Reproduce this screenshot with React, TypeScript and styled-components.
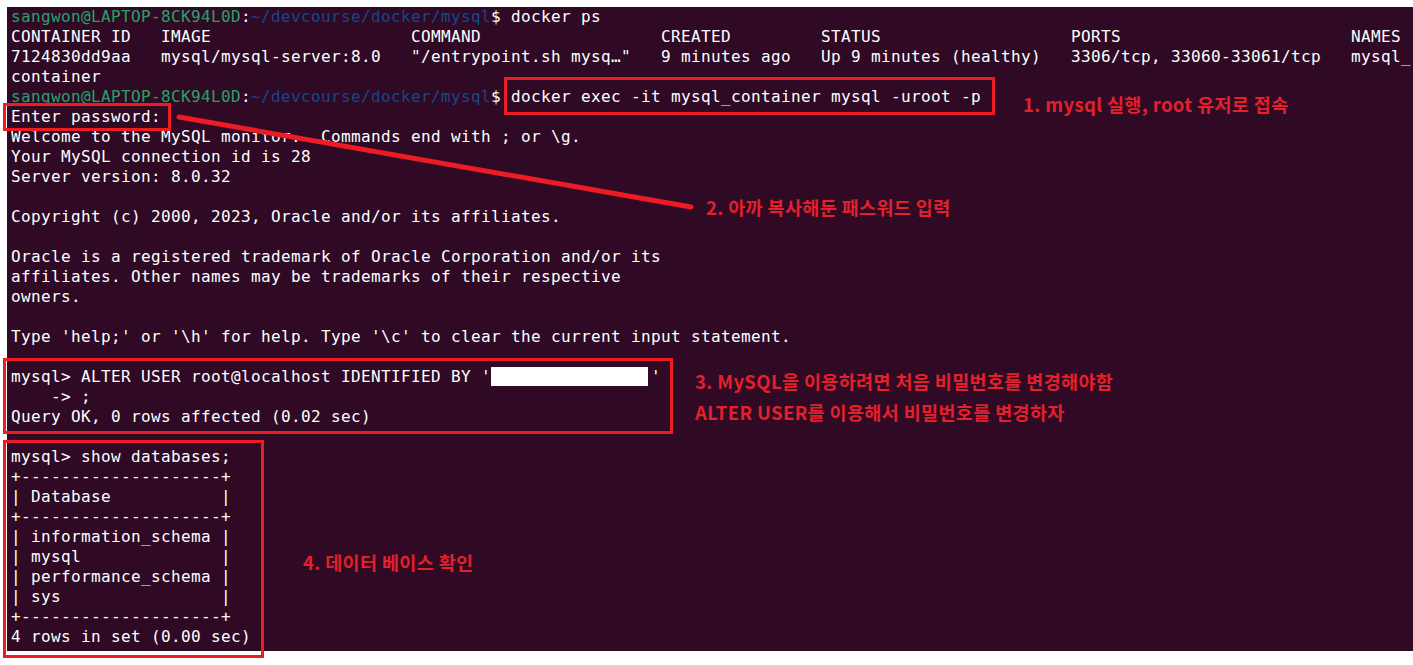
import React, { FC } from "react";
import styled, { createGlobalStyle } from "styled-components";

const GlobalStyle = createGlobalStyle`
  html, body {
    margin: 0;
    padding: 0;
    background: #ffffff;
  }
`;

const Page = styled.div`
  padding: 7px 0 0 7px;
  width: 1413px;
  height: 665px;
  box-sizing: border-box;
  overflow: hidden;
`;

const Terminal = styled.div`
  position: relative;
  display: flex;
  flex-direction: column;
  background: #300a24;
  height: 644px;
  padding-left: 4px;
  color: #ffffff;
  font-family: "DejaVu Sans Mono", "Liberation Mono", monospace;
  font-size: 16px;
  letter-spacing: 0.367px;
`;

const Line = styled.div`
  height: 20px;
  line-height: 20px;
  white-space: pre;
  overflow: hidden;
`;

const User = styled.span`
  color: #26a269;
`;

const Path = styled.span`
  color: #12488b;
`;

const Redacted = styled.span`
  display: inline-block;
  width: 157px;
  height: 19px;
  margin-right: 3px;
  vertical-align: -4px;
  background: #ffffff;
`;

const RedBox = styled.div<{ $x: number; $y: number; $w: number; $h: number }>`
  position: absolute;
  left: ${(p) => p.$x}px;
  top: ${(p) => p.$y}px;
  width: ${(p) => p.$w}px;
  height: ${(p) => p.$h}px;
  box-sizing: border-box;
  border: 3px solid #ed1c24;
`;

const Note = styled.div<{ $x: number; $y: number }>`
  position: absolute;
  left: ${(p) => p.$x}px;
  top: ${(p) => p.$y}px;
  display: flex;
  flex-direction: column;
  gap: 11px;
  line-height: 20px;
  white-space: nowrap;
  color: #e3202b;
  font-family: "Noto Sans CJK KR", "Noto Sans", sans-serif;
  font-weight: 700;
  font-size: 18.5px;
`;

const Pointer = styled.svg`
  position: absolute;
  left: 0;
  top: 0;
  overflow: visible;
  pointer-events: none;
`;

const Prompt: FC<{ cmd: string }> = ({ cmd }) => (
  <Line>
    <User>sangwon@LAPTOP-8CK94L0D</User>:<Path>~/devcourse/docker/mysql</Path>$ {cmd}
  </Line>
);

const cols = [15, 25, 25, 16, 25, 28];
const row = (cells: string[]) =>
  cells.map((c, i) => (i < cols.length ? c.padEnd(cols[i], " ") : c)).join("");

const header = row(["CONTAINER ID", "IMAGE", "COMMAND", "CREATED", "STATUS", "PORTS", "NAMES"]);
const container = row([
  "7124830dd9aa",
  "mysql/mysql-server:8.0",
  '"/entrypoint.sh mysq…"',
  "9 minutes ago",
  "Up 9 minutes (healthy)",
  "3306/tcp, 33060-33061/tcp",
  "mysql_",
]);

const output = [
  "Welcome to the MySQL monitor.  Commands end with ; or \\g.",
  "Your MySQL connection id is 28",
  "Server version: 8.0.32",
  "",
  "Copyright (c) 2000, 2023, Oracle and/or its affiliates.",
  "",
  "Oracle is a registered trademark of Oracle Corporation and/or its",
  "affiliates. Other names may be trademarks of their respective",
  "owners.",
  "",
  "Type 'help;' or '\\h' for help. Type '\\c' to clear the current input statement.",
  "",
];

const databases = [
  "mysql> show databases;",
  "+--------------------+",
  "| Database           |",
  "+--------------------+",
  "| information_schema |",
  "| mysql              |",
  "| performance_schema |",
  "| sys                |",
  "+--------------------+",
  "4 rows in set (0.00 sec)",
];

const App: FC = () => (
  <Page>
    <GlobalStyle />
    <Terminal>
      <Prompt cmd="docker ps" />
      <Line>{header}</Line>
      <Line>{container}</Line>
      <Line>container</Line>
      <Prompt cmd="docker exec -it mysql_container mysql -uroot -p" />
      <Line>Enter password:</Line>
      {output.map((l, i) => (
        <Line key={i}>{l}</Line>
      ))}
      <Line>
        mysql&gt; ALTER USER root@localhost IDENTIFIED BY '<Redacted />'
      </Line>
      <Line>{"    -> ;"}</Line>
      <Line>Query OK, 0 rows affected (0.02 sec)</Line>
      <Line />
      {databases.map((l, i) => (
        <Line key={i}>{l}</Line>
      ))}

      <RedBox $x={497} $y={70} $w={491} $h={38} />
      <RedBox $x={-4} $y={96} $w={168} $h={28} />
      <RedBox $x={-4} $y={351} $w={670} $h={76} />
      <RedBox $x={-4} $y={433} $w={261} $h={218} />

      <Pointer width="1" height="1">
        <line x1={172} y1={110} x2={684} y2={200} stroke="#ed1c24" strokeWidth={5} strokeLinecap="round" />
      </Pointer>

      <Note $x={1016} $y={87}>
        <span>1. mysql 실행, root 유저로 접속</span>
      </Note>
      <Note $x={699} $y={190}>
        <span>2. 아까 복사해둔 패스워드 입력</span>
      </Note>
      <Note $x={688} $y={364}>
        <span>3. MySQL을 이용하려면 처음 비밀번호를 변경해야함</span>
        <span>ALTER USER를 이용해서 비밀번호를 변경하자</span>
      </Note>
      <Note $x={296} $y={545}>
        <span>4. 데이터 베이스 확인</span>
      </Note>
    </Terminal>
  </Page>
);

export default App;
